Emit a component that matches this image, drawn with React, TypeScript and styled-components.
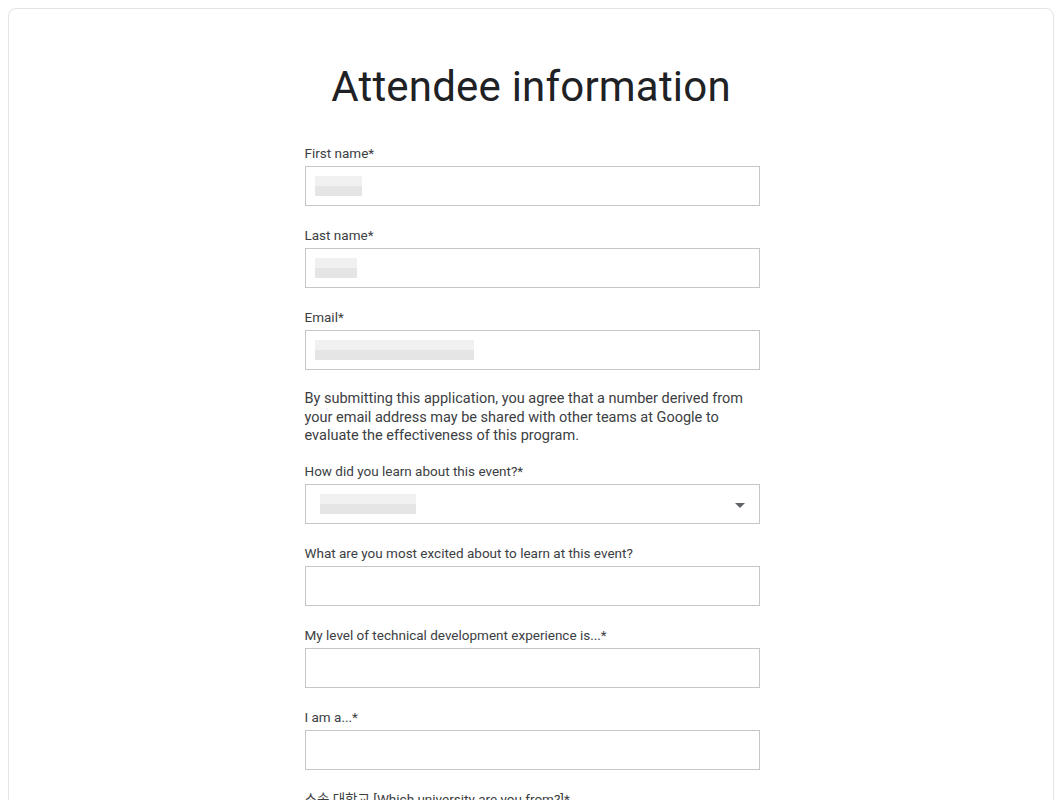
import styled, { createGlobalStyle } from 'styled-components';

const GlobalStyle = createGlobalStyle`
  body {
    margin: 8px;
    background: #ffffff;
    font-family: Roboto, "Noto Sans CJK KR", sans-serif;
  }
`;

type Field = {
  label: string;
  blur?: number;
  select?: boolean;
};

const fields: Field[] = [
  { label: 'First name*', blur: 47 },
  { label: 'Last name*', blur: 42 },
  { label: 'Email*', blur: 159 },
];

const moreFields: Field[] = [
  { label: 'How did you learn about this event?*', blur: 96, select: true },
  { label: 'What are you most excited about to learn at this event?' },
  { label: 'My level of technical development experience is...*' },
  { label: 'I am a...*' },
];

const FormField = ({ label, blur, select }: Field) => (
  <FieldWrap>
    <Label>{label}</Label>
    <InputBox>
      {blur ? <Blurred $width={blur} $select={select} /> : null}
      {select && <Caret />}
    </InputBox>
  </FieldWrap>
);

const App = () => {
  return (
    <>
      <GlobalStyle />
      <Card>
        <Title>Attendee information</Title>
        <Form>
          {fields.map((f) => (
            <FormField key={f.label} {...f} />
          ))}
          <Notice>
            By submitting this application, you agree that a number derived from
            your email address may be shared with other teams at Google to
            evaluate the effectiveness of this program.
          </Notice>
          {moreFields.map((f) => (
            <FormField key={f.label} {...f} />
          ))}
          <Label>소속 대학교 [Which university are you from?]*</Label>
        </Form>
      </Card>
    </>
  );
};

export default App;

const Card = styled.div`
  border: 1px solid #e3e3e3;
  border-radius: 8px;
  min-height: 900px;
  box-sizing: border-box;
  display: flex;
  flex-direction: column;
  align-items: center;
`;

const Title = styled.h1`
  margin: 52px 0 30px;
  font-family: Roboto, sans-serif;
  font-size: 42px;
  font-weight: 400;
  line-height: 52px;
  color: #202124;
  letter-spacing: 0.2px;
`;

const Form = styled.div`
  width: 455px;
  margin-left: 2px;
  display: flex;
  flex-direction: column;
`;

const FieldWrap = styled.div`
  display: flex;
  flex-direction: column;
  margin-bottom: 19px;
`;

const Label = styled.div`
  font-size: 13.5px;
  line-height: 20px;
  color: #3c4043;
  margin-bottom: 3px;
`;

const InputBox = styled.div`
  height: 40px;
  box-sizing: border-box;
  border: 1px solid #c6c6c6;
  display: flex;
  align-items: center;
  padding: 0 9px;
  position: relative;
`;

const Blurred = styled.div<{ $width: number; $select?: boolean }>`
  width: ${(p) => p.$width}px;
  height: 20px;
  margin-left: ${(p) => (p.$select ? 5 : 0)}px;
  background: linear-gradient(#efefef 0 50%, #e2e2e2 50% 100%);
  opacity: 0.9;
`;

const Caret = styled.div`
  position: absolute;
  right: 14px;
  top: 18px;
  width: 0;
  height: 0;
  border-left: 5px solid transparent;
  border-right: 5px solid transparent;
  border-top: 5px solid #5f6368;
`;

const Notice = styled.p`
  margin: 1px 0 15px;
  font-size: 14.5px;
  line-height: 18.5px;
  color: #3c4043;
`;
